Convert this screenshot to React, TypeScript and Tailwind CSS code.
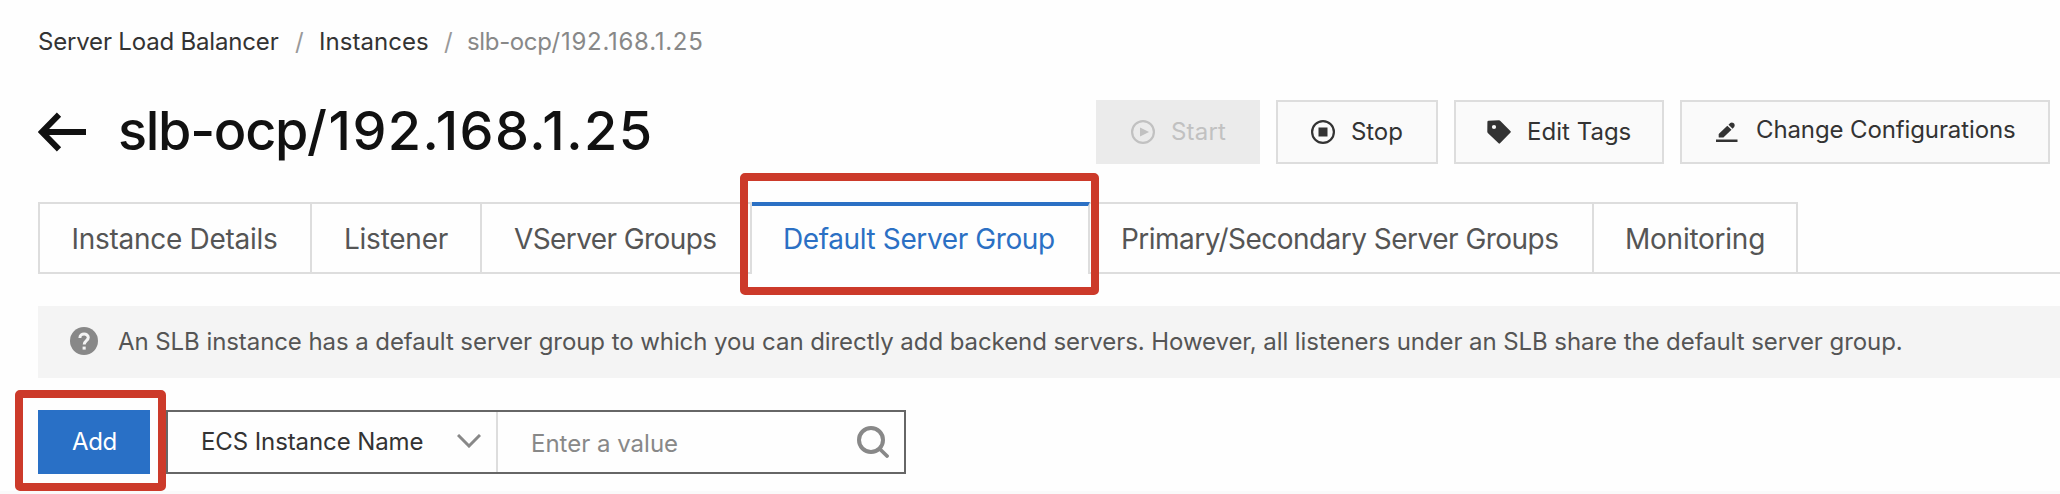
import React from "react";

type IconProps = { className?: string };

function ArrowLeftIcon({ className }: IconProps) {
  return (
    <svg className={className} viewBox="0 0 48 40" fill="none" stroke="#111" strokeWidth="6">
      <path d="M48 20H5" />
      <path d="M21 2.700L4 20L21 37.300" />
    </svg>
  );
}

function StartIcon({ className }: IconProps) {
  return (
    <svg className={className} viewBox="0 0 24 24">
      <circle cx="12" cy="12" r="10.900" fill="none" stroke="#c1c1c1" strokeWidth="2.200" />
      <path d="M9 7.500L18 12L9 16.600Z" fill="#c1c1c1" />
    </svg>
  );
}

function StopIcon({ className }: IconProps) {
  return (
    <svg className={className} viewBox="0 0 24 24">
      <circle cx="12" cy="12" r="10.900" fill="none" stroke="#333" strokeWidth="2.200" />
      <path d="M7.500 7.500H16.500V16.500H7.500Z" fill="#333" />
    </svg>
  );
}

function TagIcon({ className }: IconProps) {
  return (
    <svg className={className} viewBox="0 0 24 24">
      <path
        fillRule="evenodd"
        fill="#333"
        d="M1.500 .8L12 .3Q12.800 .3 13.400 .9L23.600 11.300Q24.100 12 23.500 12.600L13 23.300Q12.300 24 11.600 23.300L.8 12.900Q.2 12.300 .3 11.600L.4 2Q.4 .9 1.500 .8ZM7 4.900A2.100 2.100 0 1 0 7 9.100A2.100 2.100 0 1 0 7 4.900Z"
      />
    </svg>
  );
}

function EditIcon({ className }: IconProps) {
  return (
    <svg className={className} viewBox="0 0 22 20" fill="#333">
      <path d="M0 17.500H21.500V20H0Z" />
      <path d="M3.200 11.400L11.300 3.700L15.500 7.800L7.400 15.500H3.200Q2.700 15.500 2.700 15V12.500Q2.700 11.900 3.200 11.400Z" />
      <path d="M12.500 2.700L14.200 1.100Q15.800 -.2 17.500 1.100Q19.500 2.900 18.200 4.900L16.600 6.700Z" />
    </svg>
  );
}

function HelpIcon({ className }: IconProps) {
  return (
    <svg className={className} viewBox="0 0 28 28">
      <circle cx="14" cy="14" r="14" fill="#888" />
      <path d="M9.900 10.900C9.900 5.700 18.300 5.900 18.300 10.600C18.300 13.700 14.200 13.700 14.200 17.600" fill="none" stroke="#f4f4f4" strokeWidth="3" />
      <path d="M12.600 19.600H15.700V22.600H12.600Z" fill="#f4f4f4" />
    </svg>
  );
}

function ChevronIcon({ className }: IconProps) {
  return (
    <svg className={className} viewBox="0 0 24 14" fill="none" stroke="#888" strokeWidth="3">
      <path d="M1 1L12 12L23 1" />
    </svg>
  );
}

function SearchIcon({ className }: IconProps) {
  return (
    <svg className={className} viewBox="0 0 32 32" fill="none" stroke="#888" strokeWidth="4">
      <circle cx="14" cy="14" r="12" />
      <path d="M22.800 23L30 30" strokeLinecap="round" strokeWidth="3.800" />
    </svg>
  );
}

const tabBase = "flex h-[72px] shrink-0 items-center border-y-2 border-r-2 border-[#ddd] pt-px text-[28px] whitespace-nowrap text-[#555]";

export default function App() {
  return (
    <main className="h-[494px] w-[2060px] overflow-hidden bg-[#fefefe] pt-[26px] pl-[38px] font-['Inter',sans-serif] text-[24px] text-[#333]">
      <nav className="flex h-8 items-center whitespace-nowrap">
        <a className="w-[257px] tracking-[-0.18px]">Server Load Balancer</a>
        <span className="w-[24px] text-[#999]">/</span>
        <a className="w-[125px] tracking-[0.047px]">Instances</a>
        <span className="w-[23px] text-[#999]">/</span>
        <span className="tracking-[0.73px] text-[#888]"><span className="tracking-[-0.35px]">slb-ocp</span>/192.168.1.25</span>
      </nav>

      <header className="mt-[42px] flex h-16 items-center whitespace-nowrap">
        <ArrowLeftIcon className="-mt-px h-10 w-12 shrink-0" />
        <h1 className="-mt-[3px] ml-[32px] w-[978px] text-[54px] leading-[64px] font-medium tracking-[1.45px] text-[#111]"><span className="tracking-[-1.3px]">slb-ocp</span>/192.168.1.25</h1>
        <div className="flex gap-4">
          <button className="flex h-16 w-[164px] items-center bg-[#ebebeb] pl-[35px] text-[#c1c1c1]">
            <StartIcon className="-mt-[1px] mr-4 size-6" />
            <span className="tracking-[0.187px]">Start</span>
          </button>
          <button className="flex h-16 w-[162px] items-center border-2 border-[#ddd] bg-[#fafafa] pl-[33px]">
            <StopIcon className="-mt-[1px] mr-4 size-6" />
            <span className="tracking-[-0.08px]">Stop</span>
          </button>
          <button className="flex h-16 w-[210px] items-center border-2 border-[#ddd] bg-[#fafafa] pl-[31px]">
            <TagIcon className="-mt-[1px] mr-4 size-6" />
            <span className="tracking-[0.02px]">Edit Tags</span>
          </button>
          <button className="flex h-16 w-[370px] items-center border-2 border-[#ddd] bg-[#fafafa] pl-[34px]">
            <EditIcon className="mr-[18px] h-5 w-[22px]" />
            <span className="-mt-[5px] tracking-[-0.115px]">Change Configurations</span>
          </button>
        </div>
      </header>

      <div className="mt-[38px] flex h-[72px]">
        <div className={`${tabBase} w-[274px] border-l-2 pl-[31.500px] tracking-[-0.281px]`}>Instance Details</div>
        <div className={`${tabBase} w-[170px] pl-[32px] tracking-[-0.25px]`}>Listener</div>
        <div className={`${tabBase} w-[270px] pl-[32px] tracking-[-0.6px]`}>VServer Groups</div>
        <div className="relative flex h-[72px] w-[338px] shrink-0 items-center border-t-4 border-r-2 border-t-[#2b70c4] border-r-[#ddd] pb-[3px] pl-[31px] text-[28px] tracking-[-0.393px] whitespace-nowrap text-[#2b70c4]">
          Default Server Group
          <div className="pointer-events-none absolute -top-[33px] -left-[12px] h-[122px] w-[359px] rounded-[5px] border-8 border-[#cc3a2a]" />
        </div>
        <div className={`${tabBase} w-[504px] pl-[31px] tracking-[-0.52px]`}>Primary/Secondary Server Groups</div>
        <div className={`${tabBase} w-[204px] pl-[31px] tracking-[-0.25px]`}>Monitoring</div>
        <div className="grow border-b-2 border-[#ddd]" />
      </div>

      <section className="mt-8 flex h-[72px] items-center bg-[#f4f4f4] pl-8 whitespace-nowrap text-[#555]">
        <HelpIcon className="-mt-[2px] mr-5 size-7" />
        <p className="tracking-[-0.074px]">An SLB instance has a default server group to which you can directly add backend servers. However, all listeners under an SLB share the default server group.</p>
      </section>

      <div className="mt-8 flex h-16 whitespace-nowrap">
        <div className="relative w-[128px]">
          <button className="flex h-16 w-[112px] items-center bg-[#2970c6] pl-[34px] tracking-[-0.4px] text-white">Add</button>
          <div className="pointer-events-none absolute -top-5 -left-[23px] h-[101px] w-[151px] rounded-[5px] border-8 border-[#cc3a2a]" />
        </div>
        <div className="flex h-16 w-[740px] items-center border-2 border-[#666]">
          <div className="flex h-full w-[330px] items-center border-r-2 border-[#ddd] pl-[33px]">
            <span className="w-[256px] tracking-[-0.1px]">ECS Instance Name</span>
            <ChevronIcon className="-mt-[2px] h-[14px] w-6" />
          </div>
          <span className="mt-1 w-[359px] pl-[33px] text-[#888]">Enter a value</span>
          <SearchIcon className="size-8" />
        </div>
      </div>
      <div className="mt-[17px] -ml-[38px] h-[3px] bg-[#fafafa]" />
    </main>
  );
}
